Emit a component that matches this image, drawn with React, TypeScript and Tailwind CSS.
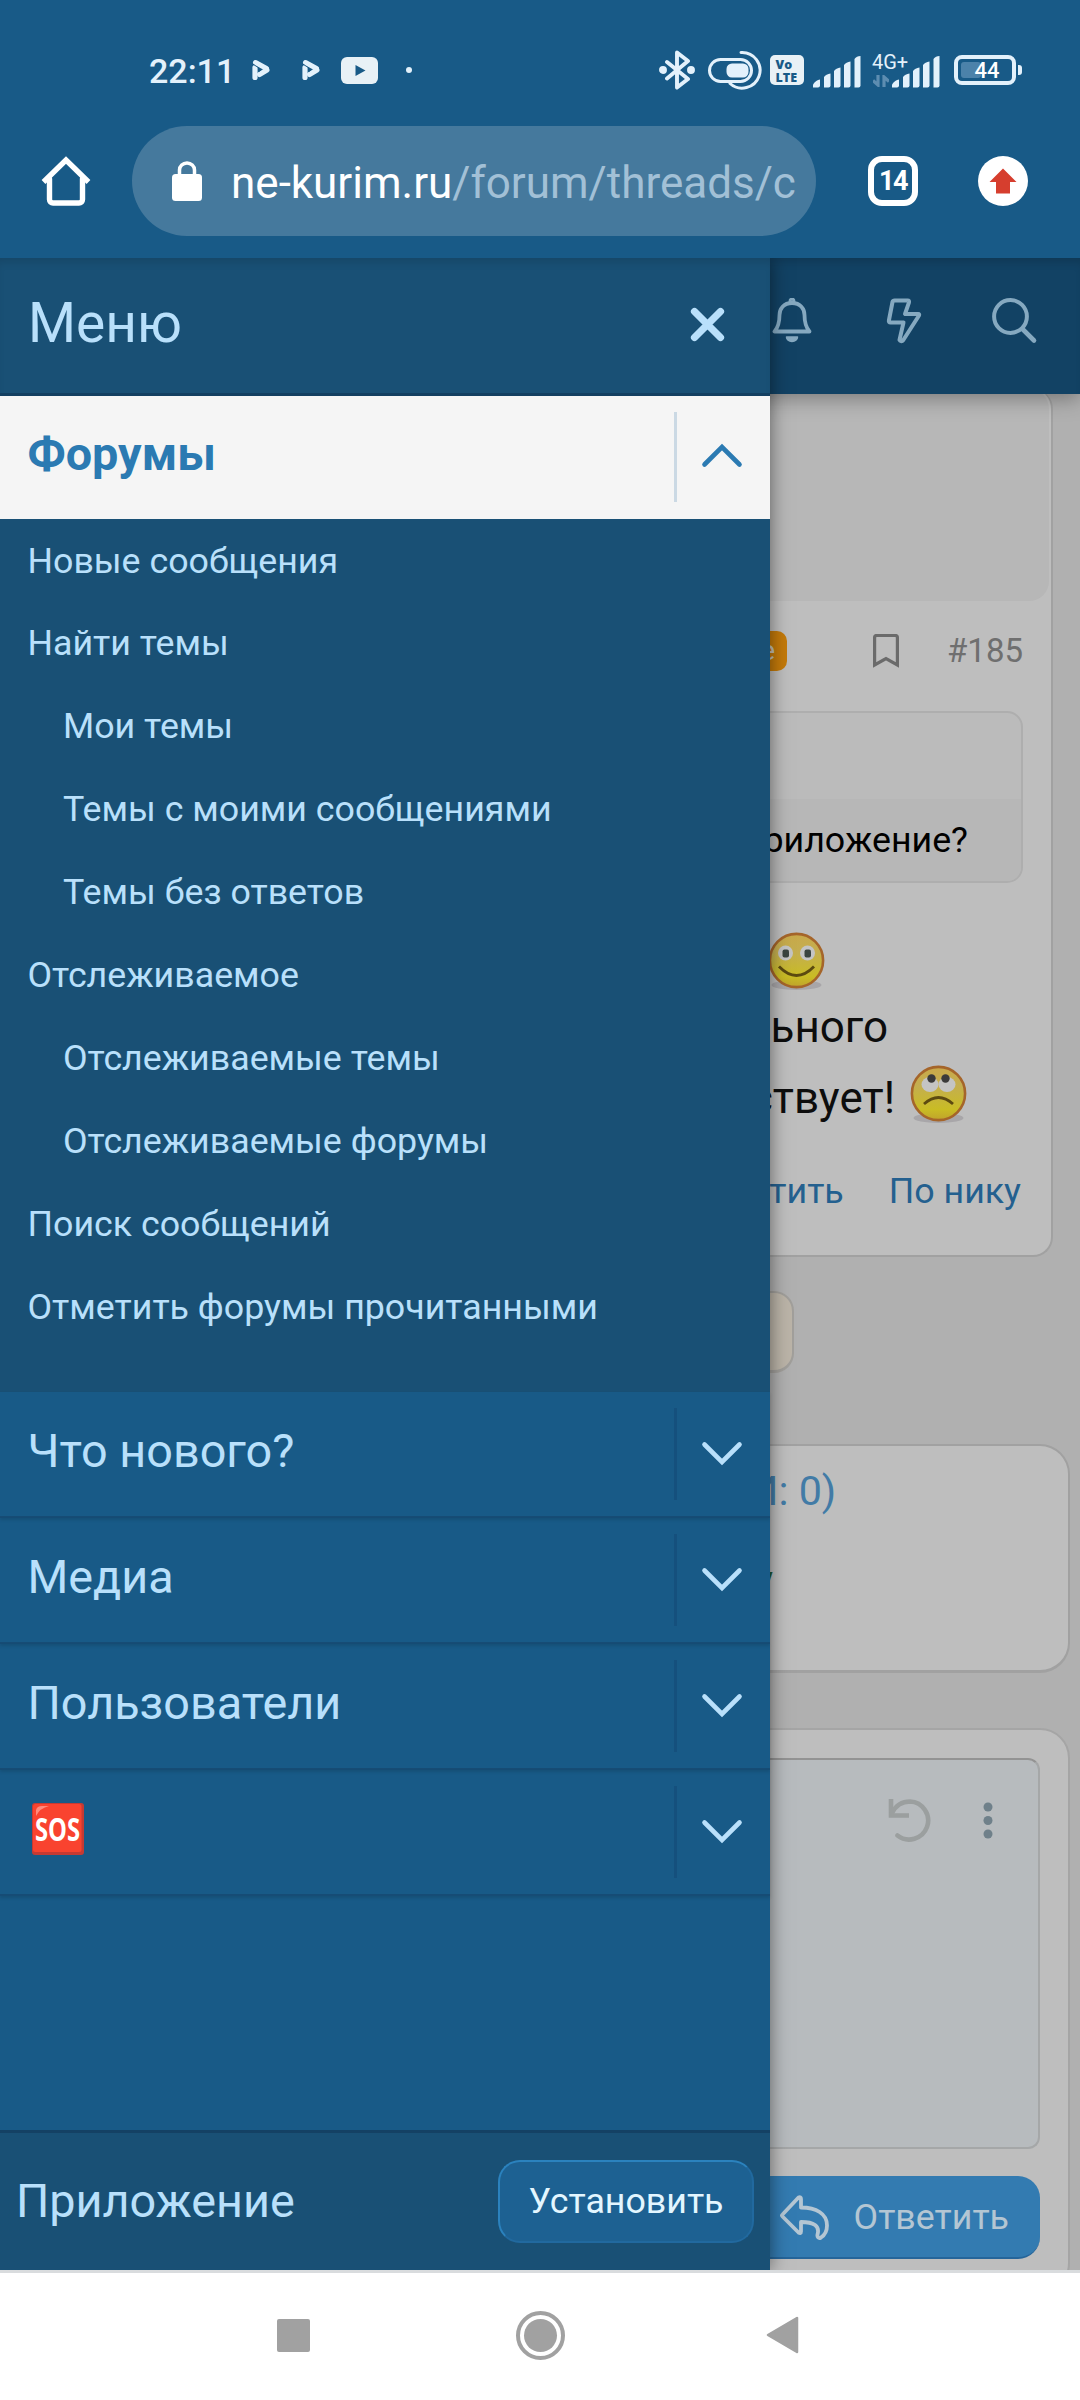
import { ReactNode } from 'react';

const forumLinks = [
  { label: 'Новые сообщения' },
  { label: 'Найти темы' },
  { label: 'Мои темы', nested: true },
  { label: 'Темы с моими сообщениями', nested: true },
  { label: 'Темы без ответов', nested: true },
  { label: 'Отслеживаемое' },
  { label: 'Отслеживаемые темы', nested: true },
  { label: 'Отслеживаемые форумы', nested: true },
  { label: 'Поиск сообщений' },
  { label: 'Отметить форумы прочитанными' }
];

function PlayMark() {
  return (
    <svg width="18" height="22" viewBox="0 0 18 22" fill="none" stroke="#e3f1fb" strokeLinejoin="round" strokeLinecap="round">
      <path d="M3 8.500v10" strokeWidth="5.200" />
      <path d="M3.500 3.500l11 6" strokeWidth="5" />
      <path d="M7.500 15.500l7.500-4.500" strokeWidth="5" />
      <path d="M0 4.500l7 4.500" stroke="#185a87" strokeWidth="1" />
      <path d="M7 10.500h3l-3 2.500z" fill="#185a87" stroke="none" />
    </svg>
  );
}

function SignalBars() {
  return (
    <svg width="49" height="32" viewBox="0 0 49 32" fill="#e3f1fb">
      <path d="M0 31.500V28.500q3-4.500 7-5v6a2 2 0 0 1-2 2z" />
      <path d="M11 31.500V21q2-3 6.500-3.500v12a2 2 0 0 1-2 2z" />
      <path d="M21 31.500V15q2-3 6.500-3.500v18a2 2 0 0 1-2 2z" />
      <path d="M31 31.500V9q2-3 6.500-3.500v24a2 2 0 0 1-2 2z" />
      <path d="M41.500 31.500V3q2-3 6-3v29.500a2 2 0 0 1-2 2z" />
    </svg>
  );
}

function StatusBar() {
  return (
    <div className="flex h-[110px] items-start pl-[149px] pt-[50px]">
      <div className="flex h-10 items-center">
        <span className="w-[103px] pt-[2px] text-[34px] font-medium leading-none text-[#e3f1fb]">22:11</span>
        <span className="w-[50px]"><PlayMark /></span>
        <span className="w-[39px]"><PlayMark /></span>
        <svg width="37" height="27" viewBox="0 0 37 27">
          <rect width="37" height="27" rx="6" fill="#e8f1f6" />
          <path d="M14.500 8l10 5.500-10 5.500z" fill="#185a87" />
        </svg>
        <span className="ml-7 h-[6px] w-[6px] rounded-full bg-[#e3f1fb]" />
      </div>
      <div className="ml-[247px] flex h-10 items-center">
        <svg width="36" height="40" viewBox="0 0 36 40" fill="none" stroke="#e3f1fb" strokeWidth="3.900" strokeLinejoin="round" strokeLinecap="round">
          <path d="M8 12l21 17-11 8.500V2.500L29 11 8 28.500" />
          <circle cx="4" cy="20" r="2" />
          <circle cx="32" cy="20" r="2" />
        </svg>
        <svg className="ml-3" width="55" height="40" viewBox="0 0 55 40" fill="none" stroke="#e3f1fb" strokeWidth="3" strokeLinecap="round">
          <rect x="2.500" y="9.500" width="42" height="22" rx="11" />
          <rect x="21" y="15" width="19" height="11" rx="4" fill="#e3f1fb" />
          <path d="M34 2.500a18 17.800 0 1 1-11 31" />
        </svg>
        <svg className="ml-2" width="34" height="30" viewBox="0 0 34 30" fontFamily="Open Sans, sans-serif">
          <rect width="34" height="30" rx="5" fill="#e8f1f6" />
          <text x="5.500" y="13.500" fontSize="12.500" fontWeight="800" fill="#185a87">Vo</text>
          <text x="5.500" y="26.500" fontSize="12.500" fontWeight="800" fill="#185a87">LTE</text>
        </svg>
        <span className="ml-[9px] mt-1"><SignalBars /></span>
        <div className="relative ml-[10px] h-10 w-5">
          <span className="absolute left-0 top-[2px] text-[20px] leading-5 text-[#e3f1fb]">4G+</span>
          <svg className="absolute left-px top-[25px]" width="16" height="12" viewBox="0 0 16 12" fill="none" stroke="#5d8db1" strokeWidth="3.200">
            <path d="M5 0v10L0 5.500M11 12V2L16 6.500" />
          </svg>
        </div>
        <span className="mt-1"><SignalBars /></span>
        <div className="ml-[13px] flex h-[30px] w-[62px] items-center rounded-[8px] border-4 border-[#e3f1fb] px-[3px]">
          <div className="relative flex h-[16px] w-full items-center justify-center">
            <span className="absolute left-0 top-0 h-full w-[20px] rounded-[3px] bg-[#4c82aa]" />
            <span className="relative pl-1 pt-px text-[22px] font-medium leading-none text-white">44</span>
          </div>
        </div>
        <span className="ml-[2px] h-[10px] w-[4px] rounded-r-[3px] bg-[#e3f1fb]" />
      </div>
    </div>
  );
}

function BrowserBar() {
  return (
    <div className="flex h-[148px] items-start pl-10 pt-4">
      <svg className="mt-[30px]" width="52" height="52" viewBox="0 0 52 52" fill="none" stroke="#fff" strokeWidth="5.400" strokeLinecap="round" strokeLinejoin="round">
        <path d="M3.500 26L26 4l22.500 22" strokeLinejoin="miter" strokeLinecap="butt" />
        <path d="M9.500 23v20.500a3.500 3.500 0 0 0 3.500 3.500h26a3.500 3.500 0 0 0 3.500-3.500V23" />
      </svg>
      <div className="ml-10 flex h-[110px] w-[684px] items-center rounded-full bg-[#45799d] pl-10">
        <svg width="30" height="40" viewBox="0 0 30 40">
          <rect y="13" width="30" height="27" rx="3.500" fill="#fff" />
          <path d="M7.500 15V9a7.500 7 0 0 1 15 0v6" fill="none" stroke="#fff" strokeWidth="3.500" />
        </svg>
        <p className="ml-[29px] whitespace-nowrap pt-[3px] text-[44px] leading-none text-white">
          ne-kurim.ru<span className="text-[#a2c0d6]">/forum/threads/c</span>
        </p>
      </div>
      <div className="ml-[52px] mt-[30px] flex h-[50px] w-[50px] items-center justify-center rounded-[14px] border-[6px] border-white pt-px text-[27px] font-bold leading-none tracking-[-1.5px] text-white">
        14
      </div>
      <svg className="ml-[60px] mt-[30px]" width="50" height="50" viewBox="0 0 50 50">
        <circle cx="25" cy="25" r="25" fill="#fff" />
        <path d="M25 12.500L38.500 26H32v11.500H18V26h-6.500z" fill="#d63e2e" />
      </svg>
    </div>
  );
}

function Smiley({ sad = false }: { sad?: boolean }) {
  return (
    <svg width="57" height="60" viewBox="0 0 57 60" className="shrink-0">
      <defs>
        <linearGradient id="smileyFace" x1="0" y1="0" x2="0" y2="1">
          <stop offset="0" stopColor="#c9a94a" />
          <stop offset="0.350" stopColor="#c4ae50" />
          <stop offset="0.800" stopColor="#c9bc24" />
          <stop offset="1" stopColor="#c0a32c" />
        </linearGradient>
      </defs>
      <ellipse cx="28.500" cy="53" rx="25" ry="5" fill="#a8a6a9" />
      <circle cx="28.500" cy="28.500" r="26.600" fill="url(#smileyFace)" stroke="#a5652a" strokeWidth="2.600" />
      {sad ? (
        <>
          <ellipse cx="20" cy="19.500" rx="8.500" ry="7.500" fill="#c4c4c4" />
          <ellipse cx="37" cy="19.500" rx="8.500" ry="7.500" fill="#c4c4c4" />
          <circle cx="21.500" cy="13.500" r="4.200" fill="#3a3a3a" />
          <circle cx="35.500" cy="13.500" r="4.200" fill="#3a3a3a" />
          <path d="M14 39q14.500-13 29 0" fill="none" stroke="#5c4a10" strokeWidth="2.800" />
        </>
      ) : (
        <>
          <circle cx="17.500" cy="21" r="7.500" fill="#c4c4c4" />
          <circle cx="39.500" cy="21" r="7.500" fill="#c4c4c4" />
          <rect x="14.500" y="17.500" width="6.500" height="8" rx="2" fill="#3a4440" />
          <rect x="36.500" y="17.500" width="6.500" height="8" rx="2" fill="#3a4440" />
          <path d="M11 34.500q17.500 18 35 0" fill="none" stroke="#5c4a10" strokeWidth="2.800" />
        </>
      )}
    </svg>
  );
}

function ForumPage() {
  return (
    <div className="flex h-full flex-col bg-[#b0b0b0]">
      <header className="relative z-10 flex h-[136px] shrink-0 items-center justify-end gap-[50px] bg-[#124264] pb-[10px] pr-[42px] shadow-[inset_0_8px_8px_-4px_rgba(0,0,0,0.15),0_4px_20px_rgba(0,0,0,0.35)]">
        <svg className="mr-[24px]" width="40" height="46" viewBox="0 0 40 46" fill="none" stroke="#86a9c0" strokeWidth="3.800" strokeLinejoin="round">
          <circle cx="20" cy="3" r="1.500" />
          <path d="M20 5C11.500 5 7.500 11 7.500 17c0 8-1.500 12.500-5 16.500h35c-3.500-4-5-8.500-5-16.500 0-6-4-12-12.500-12z" />
          <path d="M14.500 39h11c0 2.500-2.500 4.500-5.500 4.500s-5.500-2-5.500-4.500z" fill="#86a9c0" strokeWidth="1.500" />
        </svg>
        <svg width="36" height="46" viewBox="0 0 36 46" fill="none" stroke="#86a9c0" strokeWidth="4" strokeLinejoin="round">
          <path d="M8.500 2.500h13.200q1.800 0 1.300 1.800L19 16h13.200q1.500 0 .8 1.500L17 42.500q-2.500 1.500-3.500-.6L17.500 24.500H4.500q-2 0-1.600-2L6.500 4Q7 2.500 8.500 2.500z" />
        </svg>
        <svg className="ml-[20px]" width="46" height="46" viewBox="0 0 46 46" fill="none" stroke="#86a9c0" strokeWidth="4" strokeLinecap="round">
          <circle cx="18.500" cy="18.500" r="16.400" />
          <path d="M30.500 31L42 42.500" strokeWidth="4.600" />
        </svg>
      </header>

      {/* Post */}
      <article className="-mt-[5px] mr-[27px] flex h-[868px] shrink-0 flex-col rounded-[20px] border-b-2 border-r-2 border-[#a1a1a1] bg-[#bebebe]">
        <div className="mr-[2px] h-[212px] shrink-0 rounded-r-[20px] bg-[#b7b7b7]" />
        <div className="flex h-[110px] shrink-0 items-center justify-end pb-[11px] pr-[28px] text-[#6f6f6f]">
          <span className="mr-[86px] flex h-10 w-[90px] items-center justify-end rounded-[10px] bg-[#c47a0a] pr-[12px] text-[28px] text-[#c9c2b5]">Мне</span>
          <svg className="mr-[48px]" width="26" height="34" viewBox="0 0 26 34" fill="none" stroke="#6b6b6b" strokeWidth="3.200">
            <path d="M1.600 31V3.500q0-2 2-2h18.800q2 0 2 2V31L13 24.500z" />
          </svg>
          <span className="text-[33px] leading-none">#185</span>
        </div>
        <div className="mr-[28px] flex h-[172px] shrink-0 flex-col overflow-hidden rounded-[16px] border-2 border-[#aeaeae] bg-[#bbbbbb]">
          <div className="h-[86px]" />
          <div className="flex flex-1 items-center justify-end bg-[#b7b7b7] pr-[53px] pt-px text-[35.75px] leading-none text-black">
            приложение?
          </div>
        </div>
        <div className="mt-[45px] flex shrink-0 flex-col items-end text-[44px] leading-none text-[#0d0d0d]">
          <div className="flex h-[68px] items-center pr-[226px]"><Smiley /></div>
          <div className="flex h-[63px] items-center pb-[2px] pr-[163px]">действительного</div>
          <div className="flex h-[75px] items-center gap-[15px] pr-[84px]">
            <span className="pt-[2px]">отсутствует!</span>
            <span className="pb-[3px]"><Smiley sad /></span>
          </div>
        </div>
        <div className="flex flex-1 items-center justify-end gap-[45px] pb-[6px] pr-[30px] text-[35.75px] leading-none text-[#24608f]">
          <span>Ответить</span>
          <span>По нику</span>
        </div>
      </article>

      <div className="mt-[34px] h-[82px] w-[794px] shrink-0 rounded-[20px] border-2 border-b-[3px] border-[#a19f9b] bg-[#bbb4a8]" />

      {/* Similar topics */}
      <section className="mr-[10px] mt-[71px] h-[229px] shrink-0 rounded-[30px] border-2 border-b-[3px] border-[#a1a1a1] bg-[#bebebe]">
        <div className="flex h-[92px] items-center pl-[747px] text-[41.25px] leading-none text-[#427ba6]">
          <span className="whitespace-nowrap">И: 0)</span>
        </div>
        <p className="pl-[753px] pt-[16px] text-[38px] leading-[52px] text-[#1f5a38]">у</p>
      </section>

      {/* Quick reply */}
      <section className="mr-[10px] mt-[55px] flex h-[565px] shrink-0 flex-col items-end rounded-[30px] border-2 border-[#a5a5a5] bg-[#bebebe] pr-[28px] pt-[28px]">
        <div className="flex h-[391px] w-full items-start justify-end rounded-[12px] border-2 border-[#a5a7a8] border-t-[#939393] bg-[#b7bbbe] pr-[45px] pt-[37px]">
          <svg width="46" height="46" viewBox="0 0 46 46" fill="none" stroke="#9b9f9f" strokeWidth="4.600">
            <path d="M4 2v16.500h18" />
            <path d="M5 16C9 8 15 4.500 23 4.500a19 19 0 1 1-12.500 34" strokeLinecap="round" />
          </svg>
          <svg className="ml-[50px] mt-[5px]" width="10" height="37" viewBox="0 0 10 37" fill="#6f808a">
            <circle cx="5" cy="5" r="4.500" />
            <circle cx="5" cy="18.500" r="4.500" />
            <circle cx="5" cy="32" r="4.500" />
          </svg>
        </div>
        <button className="mt-[27px] flex h-[83px] w-[300px] shrink-0 items-center justify-end rounded-[22px] border-b-2 border-[#25659a] bg-[#337bb1] pr-[31px] pt-[3px] text-[35.75px] leading-none text-[#b4c6d3]">
          <svg className="mr-[24px]" width="50" height="46" viewBox="0 0 50 46" fill="none" stroke="#b4c6d3" strokeWidth="3.800" strokeLinejoin="round">
            <path d="M2.500 19.500L18.500 2.500q2.500-1 2.500 1.500v8.500c15 0 26 6 26 18 0 6-3 10-6 12-2.500 1.500-4-.5-3.500-3C40 31 34 27 21 27v9.500q0 2.500-2.500 1L2.500 21.500q-1-1 0-2z" />
          </svg>
          Ответить
        </button>
      </section>
    </div>
  );
}

function Chevron({ up = false }: { up?: boolean }) {
  return (
    <svg width="42" height="25" viewBox="0 0 42 25" fill="none" strokeWidth="4.600" strokeLinecap="round" stroke={up ? '#2b7ab2' : '#b9e0fb'}>
      <path d={up ? 'M3.500 21.500L21 4l17.500 17.500' : 'M3.500 3.500L21 21 38.500 3.500'} />
    </svg>
  );
}

function SosBadge() {
  return (
    <svg width="52" height="52" viewBox="0 0 52 52" className="ml-1">
      <rect width="52" height="52" rx="3" fill="#c63a33" />
      <rect x="1" y="1" width="48.500" height="48" rx="2.500" fill="#f9432f" />
      <path d="M4 13V7q1-4 6-4h7q-9 2-13 10z" fill="#ff8a7c" />
      <g transform="translate(3 38) scale(0.72 1)">
        <text fontSize="33" fontWeight="700" fill="#fff" fontFamily="Open Sans, sans-serif">SOS</text>
      </g>
    </svg>
  );
}

function MenuSection({ children }: { children: ReactNode }) {
  return (
    <div className="flex h-[126px] shrink-0 items-center border-b-2 border-[#164c75] pl-[27.5px] text-[46.75px] leading-none text-[#b9e0fb] shadow-[0_2px_3px_rgba(0,0,0,0.12)]">
      <div className="flex-1 pb-[6px]">{children}</div>
      <div className="flex h-[92px] w-[96px] items-center justify-center border-l-[3px] border-[#15507d] pb-px pr-[4px]">
        <Chevron />
      </div>
    </div>
  );
}

function Drawer() {
  return (
    <aside className="absolute left-0 top-0 z-20 flex h-full w-[770px] flex-col bg-[#185a87] shadow-[0_0_18px_rgba(0,0,0,0.5)]">
      <div className="flex h-[138px] shrink-0 items-center justify-between border-b-[3px] border-[#133f61] bg-[#195075] pl-[28px] pr-[45px] shadow-[inset_0_8px_8px_-4px_rgba(0,0,0,0.12)]">
        <span className="pb-[5px] text-[55px] leading-none text-[#b9e0fb]">Меню</span>
        <svg className="mb-[2px]" width="35" height="35" viewBox="0 0 35 35" fill="none" stroke="#b9e0fb" strokeWidth="7.200" strokeLinecap="round">
          <path d="M4.500 4.500l26 26M30.500 4.500l-26 26" />
        </svg>
      </div>

      <div className="flex h-[123px] shrink-0 items-center bg-[#f5f5f5] pl-[27.5px] text-[46.75px] font-bold leading-none text-[#2b7ab2]">
        <span className="flex-1 pb-[6px]">Форумы</span>
        <div className="mb-px flex h-[90px] w-[96px] items-center justify-center border-l-[3px] border-[#cbd9e4] pb-[3px] pr-[4px]">
          <Chevron up />
        </div>
      </div>

      <nav className="h-[873px] shrink-0 bg-[#195075] pt-px text-[35.75px] leading-none text-[#b9e0fb]">
        {forumLinks.map((link) => (
          <div key={link.label} className={`flex h-[82.9px] items-center ${link.nested ? 'pl-[63px]' : 'pl-[27.5px]'}`}>
            {link.label}
          </div>
        ))}
      </nav>

      <MenuSection>Что нового?</MenuSection>
      <MenuSection>Медиа</MenuSection>
      <MenuSection>Пользователи</MenuSection>
      <MenuSection><SosBadge /></MenuSection>

      <div className="mt-auto flex h-[140px] shrink-0 items-center justify-between border-t-[3px] border-[#144164] bg-[#195075] pl-4 pr-[16px]">
        <span className="text-[46.75px] leading-none text-[#b9e0fb]">Приложение</span>
        <button className="flex h-[83px] w-[256px] items-center justify-center rounded-[22px] border-2 border-[#21699f] border-l-[#2b82be] border-t-[#2b82be] bg-[#1d6192] pt-px text-[35.75px] leading-none text-[#e3f6ff]">
          Установить
        </button>
      </div>
    </aside>
  );
}

export default function App() {
  return (
    <div className="flex h-[2400px] w-[1080px] flex-col overflow-hidden bg-white font-['Roboto','Noto_Sans',sans-serif]">
      <div className="h-[258px] shrink-0 bg-[#185a87]">
        <StatusBar />
        <BrowserBar />
      </div>

      <div className="relative h-[2012px] shrink-0 overflow-hidden">
        <ForumPage />
        <Drawer />
      </div>

      {/* System navigation */}
      <div className="flex flex-1 items-center border-t-[3px] border-[#d9dcde] bg-white pb-[3px] pl-[277px]">
        <div className="h-[33px] w-[33px] rounded-[2px] bg-[#a1a1a1]" />
        <div className="ml-[206px] flex h-[49px] w-[49px] items-center justify-center rounded-full border-4 border-[#a1a1a1]">
          <div className="h-[33px] w-[33px] rounded-full bg-[#a1a1a1]" />
        </div>
        <svg className="ml-[201px]" width="33" height="38" viewBox="0 0 33 38">
          <path d="M31 2v34L2 19z" fill="#a1a1a1" stroke="#a1a1a1" strokeWidth="2.500" strokeLinejoin="round" />
        </svg>
      </div>
    </div>
  );
}
